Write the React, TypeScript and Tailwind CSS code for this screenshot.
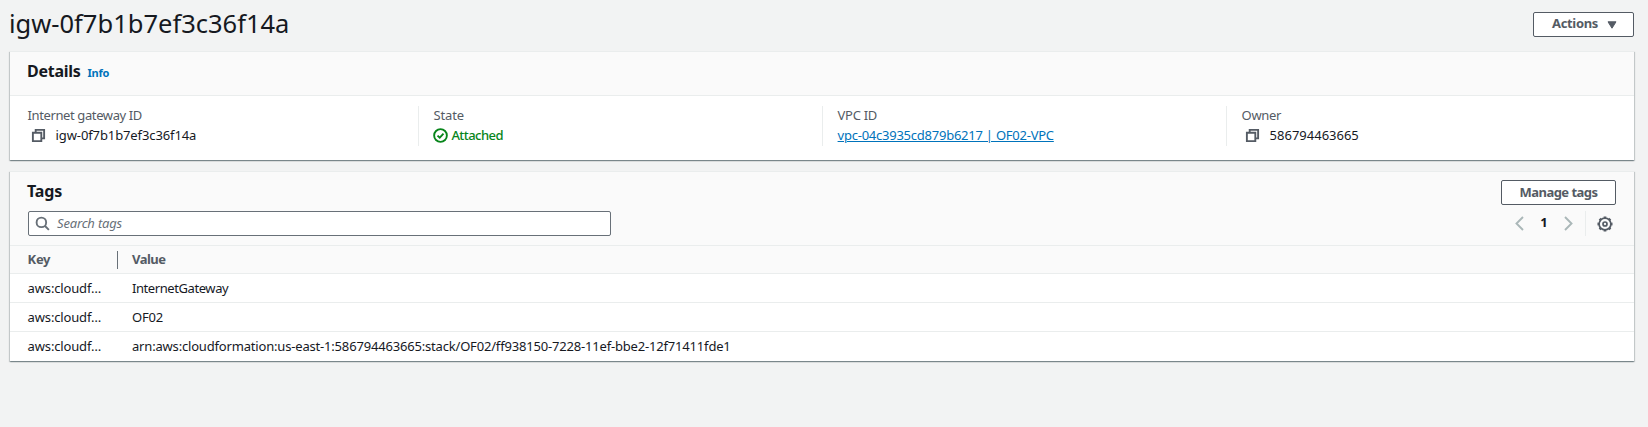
import type { ReactNode } from "react";

function CopyIcon() {
  return (
    <svg viewBox="0 0 16 16" className="h-[15px] w-[15px] shrink-0" fill="none" stroke="#545b64" strokeWidth="2">
      <path d="M2 5h9v9H2z" />
      <path d="M5 5V2h9v9h-3" />
    </svg>
  );
}

function CheckCircleIcon() {
  return (
    <svg viewBox="0 0 16 16" className="h-[15px] w-[15px] shrink-0" fill="none" stroke="#07851a" strokeWidth="2">
      <circle cx="8" cy="8" r="6.8" />
      <path d="M4.8 8.1 7.2 10.3 11.2 6" />
    </svg>
  );
}

function SearchIcon() {
  return (
    <svg viewBox="0 0 16 16" className="h-[15px] w-[15px] shrink-0" fill="none" stroke="#687078" strokeWidth="2">
      <circle cx="6.8" cy="6.8" r="5.1" />
      <path d="m10.4 10.4 4.4 4.4" />
    </svg>
  );
}

function Chevron({ d }: { d: string }) {
  return (
    <svg viewBox="0 0 9 15" className="h-[15px] w-[9px] shrink-0" fill="none" stroke="#aab7b8" strokeWidth="1.9">
      <path d={d} />
    </svg>
  );
}

function GearIcon() {
  return (
    <svg viewBox="0 0 16 16" className="h-4 w-4 shrink-0" fill="none" stroke="#545b64">
      <circle cx="8" cy="8" r="5.9" strokeWidth="1.7" />
      <circle cx="8" cy="8" r="6.8" strokeWidth="1.5" pathLength="80" strokeDasharray="5 5" strokeDashoffset="2.5" />
      <circle cx="8" cy="8" r="2" strokeWidth="1.7" />
    </svg>
  );
}

function Card({ height, children }: { height: string; children: ReactNode }) {
  return (
    <section
      className={`${height} flex flex-col border-t border-[#eaeded] bg-white shadow-[0_1px_1px_0_rgba(0,28,36,0.3),1px_1px_1px_0_rgba(0,28,36,0.15),-1px_1px_1px_0_rgba(0,28,36,0.15)]`}
    >
      {children}
    </section>
  );
}

function Field({ label, labelClass, last, children }: { label: string; labelClass: string; last?: boolean; children: ReactNode }) {
  return (
    <div className={`h-10 ${last ? "" : "border-r border-[#eaeded]"}`}>
      <div className={`h-[18px] leading-[18px] text-[#545b64] ${labelClass}`}>{label}</div>
      <div className="flex h-[22px] items-center leading-[22px]">{children}</div>
    </div>
  );
}

const tags = [
  { value: "InternetGateway", cls: "tracking-[-0.42px]" },
  { value: "OF02", cls: "tracking-[-0.15px]" },
  {
    value: "arn:aws:cloudformation:us-east-1:586794463665:stack/OF02/ff938150-7228-11ef-bbe2-12f71411fde1",
    cls: "tracking-[-0.18px]",
  },
];

export default function App() {
  return (
    <main className="h-[427px] w-[1648px] overflow-hidden bg-[#f2f3f3] pr-[14px] pl-[10px] font-['Noto_Sans',sans-serif] text-[13px] text-[#16191f]">
      <header className="flex h-[51px] items-start justify-between">
        <h1 className="-ml-px text-[25.5px] leading-[46px]">igw-0f7b1b7ef3c36f14a</h1>
        <button className="mt-3 flex h-[25px] w-[101px] items-center rounded-[2px] border border-[#545b64] bg-white pl-[18px] font-bold text-[#545b64]">
          <span className="pb-[2px] leading-[21px] tracking-[-0.33px]">Actions</span>
          <svg viewBox="0 0 10 8" className="ml-[9px] h-2 w-[10px]">
            <path d="M1 .8h8L5 7.2z" fill="#545b64" stroke="#545b64" strokeLinejoin="round" />
          </svg>
        </button>
      </header>

      <Card height="h-[109px]">
        <div className="flex h-11 items-baseline border-b border-[#eaeded] bg-[#fafafa] pl-[17px] leading-[38px] font-bold">
          <h2 className="text-base leading-[38px] tracking-[-0.27px]">Details</h2>
          <a className="ml-[7px] text-[11px] tracking-[-0.27px] text-[#0073bb]">Info</a>
        </div>
        <div className="grid grid-cols-[391.4px_404px_404px_1fr] pt-[10px] pl-[17.6px]">
          <Field label="Internet gateway ID" labelClass="tracking-[-0.39px]">
            <span className="mr-[10px] ml-[3px] flex">
              <CopyIcon />
            </span>
            <span className="tracking-[-0.11px]">igw-0f7b1b7ef3c36f14a</span>
          </Field>
          <div className="pl-[14.4px]">
            <Field label="State" labelClass="tracking-[-0.1px]">
              <span className="mr-[3px] flex">
                <CheckCircleIcon />
              </span>
              <span className="font-medium tracking-[-0.55px] text-[#07851a]">Attached</span>
            </Field>
          </div>
          <div className="pl-[14.6px]">
            <Field label="VPC ID" labelClass="tracking-[-0.28px]">
              <a className="tracking-[-0.24px] text-[#0073bb] underline">vpc-04c3935cd879b6217 | OF02-VPC</a>
            </Field>
          </div>
          <div className="pl-[14.6px]">
            <Field label="Owner" labelClass="tracking-[-0.32px]" last>
              <span className="mr-[10px] ml-[3px] flex">
                <CopyIcon />
              </span>
              <span>586794463665</span>
            </Field>
          </div>
        </div>
      </Card>

      <div className="h-[11px]" />

      <Card height="h-[190px]">
        <div className="h-[74px] border-b border-[#eaeded] bg-[#fafafa] pr-[18px] pl-[17px]">
          <div className="flex h-[39px] justify-between">
            <h2 className="pt-[7px] text-base leading-[25px] font-bold tracking-[-0.17px]">Tags</h2>
            <button className="mt-2 h-[25px] w-[115px] rounded-[2px] border border-[#545b64] bg-white font-bold tracking-[-0.53px] text-[#545b64]">
              <span className="-mt-px block leading-[22px]">Manage tags</span>
            </button>
          </div>
          <div className="flex h-[25px] items-center justify-between">
            <div className="ml-px flex h-[25px] w-[583px] items-center rounded-[2px] border border-[#687078] bg-white pl-[6px]">
              <SearchIcon />
              <span className="ml-[7px] pb-px leading-[21px] tracking-[-0.18px] text-[#687078] italic">Search tags</span>
            </div>
            <div className="flex h-[25px] items-center">
              <Chevron d="M8 1 1.5 7.5 8 14" />
              <span className="mx-4 w-2 pb-px text-center font-bold">1</span>
              <Chevron d="m1 1 6.5 6.5L1 14" />
              <span className="mr-[11px] ml-[12px] h-[25px] w-px bg-[#eaeded]" />
              <span className="mr-[3px] flex">
                <GearIcon />
              </span>
            </div>
          </div>
        </div>
        <div className="flex h-7 border-b border-[#eaeded] bg-[#fafafa] pl-[17.6px] leading-[26px] font-bold text-[#545b64]">
          <span className="w-[89.4px] tracking-[-0.35px]">Key</span>
          <span className="mt-[5px] h-[18px] w-px bg-[#687078]" />
          <span className="ml-[14px] tracking-[-0.5px]">Value</span>
        </div>
        {tags.map((tag, i) => (
          <div key={tag.value} className={`flex pl-[17.6px] leading-7 ${i < 2 ? "h-[29px] border-b border-[#eaeded]" : "h-7"}`}>
            <span className="w-[104.4px] tracking-[-0.15px]">aws:cloudf…</span>
            <span className={tag.cls}>{tag.value}</span>
          </div>
        ))}
      </Card>
    </main>
  );
}
